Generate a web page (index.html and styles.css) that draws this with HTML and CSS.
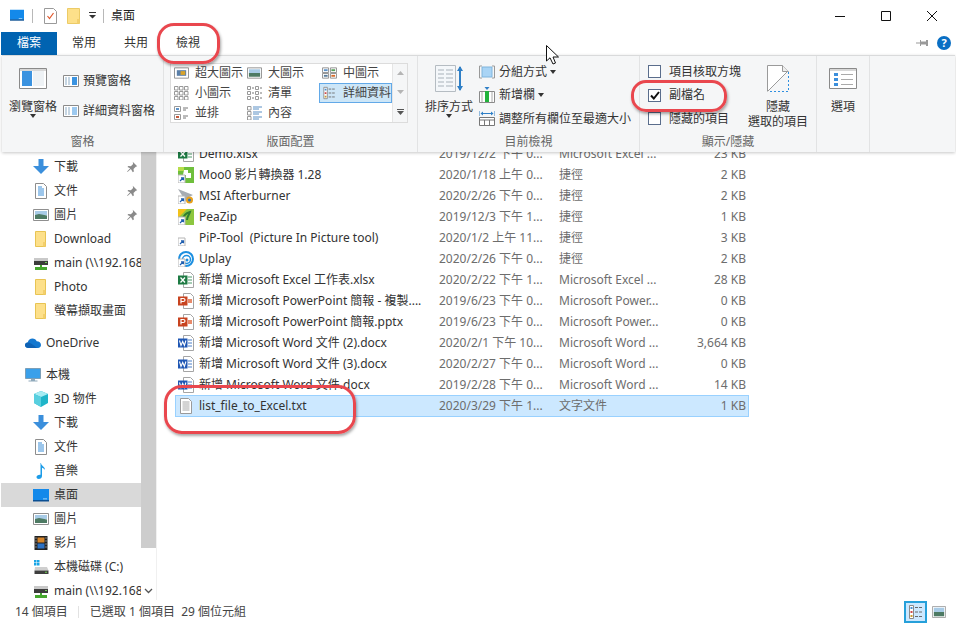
FILE: index.html
```html
<!DOCTYPE html>
<html lang="zh-Hant">
<head>
  <meta charset="UTF-8">
  <title>桌面</title>
  <link rel="stylesheet" href="styles.css">
</head>
<body>

<svg class="defs" width="0" height="0">
  <symbol id="i-folder" viewBox="0 0 16 16"><path d="M2.500 .5h10v15h-10z" fill="#fde08a" stroke="#e8c453"/><path d="M10 11h2.500v4.500H10z" fill="#f3cf6c"/></symbol>
  <symbol id="i-down" viewBox="0 0 16 16"><path d="M5.500 0h5v7H16l-8 8-8-8h5.500z" fill="#3b8fdc"/></symbol>
  <symbol id="i-doc" viewBox="0 0 16 16"><path d="M2.500 .5h8l3 3v12h-11z" fill="#fff" stroke="#8d8d8d"/><path d="M5 4h4M5 6h6M5 8h6M5 10h6M5 12h6" stroke="#3a8ed8"/></symbol>
  <symbol id="i-pic" viewBox="0 0 16 16"><path d="M.5 2.500h15v11H.5z" fill="#fff" stroke="#8f8f8f"/><path d="M2 4h12v4H2z" fill="#a8cbe6"/><path d="M2 8l4-1 8 1.500V12H2z" fill="#4d7a63"/></symbol>
  <symbol id="i-nas" viewBox="0 0 16 16"><path d="M1 3h14v3H1z" fill="#c9c9c9"/><path d="M1 6h14v4H1z" fill="#3c3c3c"/><path d="M12 7h2v1h-2z" fill="#6fd34f"/><path d="M7 10h2v2h5v3H2v-3h5z" fill="#46a72f"/></symbol>
  <symbol id="i-cloud" viewBox="0 0 16 16"><path d="M3.500 13C1.500 13 0 11.800 0 10.200 0 8.700 1.100 7.700 2.700 7.500 3.300 5 5.200 3.500 7.500 3.500c1.900 0 3.500 1 4.200 2.800C14.200 6.300 16 8 16 10.100 16 11.800 14.800 13 13 13z" fill="#1478d0"/><path d="M3.500 13C1.500 13 0 11.800 0 10.200 0 8.700 1.100 7.700 2.700 7.500c2 0 3.500 1 5.500 2.500l4 3z" fill="#0f62b4"/></symbol>
  <symbol id="i-pc" viewBox="0 0 16 16"><path d="M.5 1.500h15v10H.5z" fill="#3aa0ea" stroke="#7b9fb8"/><path d="M6 12h4v1.500h2.500v1h-9v-1H6z" fill="#8fa9bb"/></symbol>
  <symbol id="i-cube" viewBox="0 0 16 16"><path d="M8 0l7 3v9l-7 4-7-4V3z" fill="#1fb5c9"/><path d="M8 0l7 3-7 3-7-3z" fill="#a7ecf3"/><path d="M8 6v10l-7-4V3z" fill="#58cfdf"/></symbol>
  <symbol id="i-music" viewBox="0 0 16 16"><path d="M8 0c0 3 4 3.500 4 7-1-1.500-2-2-3-2.300V13c0 2-1.500 3-3.200 3C4.300 16 3.500 15 3.500 14c0-1.300 1.500-2.500 4-2.300V0z" fill="#1c9ce8"/></symbol>
  <symbol id="i-desk" viewBox="0 0 16 16"><path d="M0 2h16v11.500H0z" fill="#1389ea"/><path d="M0 13h16v1.500H0z" fill="#0b4f92"/><path d="M10 11.500h4v.8h-4z" fill="#bfe2fb"/></symbol>
  <symbol id="i-film" viewBox="0 0 16 16"><path d="M1.500 1h13v14h-13z" fill="#222"/><path d="M4.500 2.500h7v5h-7z" fill="#d6852a"/><path d="M4.500 8.500h7v5h-7z" fill="#2c71c4"/><path d="M2.500 2.500h1v1h-1zM2.500 5.500h1v1h-1zM2.500 8.500h1v1h-1zM2.500 11.500h1v1h-1zM12.500 2.500h1v1h-1zM12.500 5.500h1v1h-1zM12.500 8.500h1v1h-1zM12.500 11.500h1v1h-1z" fill="#ddd"/></symbol>
  <symbol id="i-drive" viewBox="0 0 16 16"><path d="M1 1h2.500v2.500H1zM4 1h2.500v2.500H4zM1 4h2.500v2.500H1zM4 4h2.500v2.500H4z" fill="#19a5e6"/><path d="M2 8h12l1.500 3.500h-14z" fill="#cfcfcf"/><path d="M1.500 11.500h14V15h-14z" fill="#3f3f3f"/><path d="M12 12.800h2v1h-2z" fill="#6fd34f"/></symbol>
  <symbol id="i-pin" viewBox="0 0 16 16"><path d="M9 1l6 6-2 .5-3 3 .5 3.500L9 15 6.500 10.500 2 14.500 1.500 14 5.500 9.500 2 8l1-1.500 3.500.5 3-3z" fill="#8a8a8a"/></symbol>
  <symbol id="i-xlsx" viewBox="0 0 16 16"><path d="M5.500 .5h7l3 3v12h-10z" fill="#fff" stroke="#a5a5a5"/><path d="M10 5h4M10 8h4M10 11h4" stroke="#4d9a6b"/><path d="M0 3.500h9.500v9H0z" fill="#1d7a43"/><path d="M2.500 5.500l4.500 5M7 5.500l-4.500 5" stroke="#fff" stroke-width="1.300"/></symbol>
  <symbol id="i-pptx" viewBox="0 0 16 16"><path d="M5.500 .5h7l3 3v12h-10z" fill="#fff" stroke="#a5a5a5"/><path d="M10 6h4v4h-4z" fill="#e88a6a"/><path d="M0 3.500h9.500v9H0z" fill="#c8431f"/><path d="M3 10.500v-5h2.200c1.200 0 1.800.6 1.800 1.500S6.400 8.500 5.200 8.500H3" fill="none" stroke="#fff" stroke-width="1.200"/></symbol>
  <symbol id="i-docx" viewBox="0 0 16 16"><path d="M5.500 .5h7l3 3v12h-10z" fill="#fff" stroke="#a5a5a5"/><path d="M10 5h4M10 8h4M10 11h4" stroke="#4a7fc8"/><path d="M0 3.500h9.500v9H0z" fill="#1f57b4"/><path d="M1.500 5.500l1.500 5 1.700-4 1.700 4 1.500-5" fill="none" stroke="#fff" stroke-width="1.100"/></symbol>
  <symbol id="i-txt" viewBox="0 0 16 16"><path d="M2.500 .5h8l3 3v12h-11z" fill="#fff" stroke="#9a9a9a"/><path d="M4.500 4h7M4.500 6h7M4.500 8h7M4.500 10h7M4.500 12h7" stroke="#a8a8a8"/></symbol>
  <symbol id="i-short" viewBox="0 0 16 16"><path d="M0 8h7v8H0z" fill="#fff" stroke="#b5b5b5"/><path d="M2 14l3-3M3 10.800h2.500v2.500" fill="none" stroke="#1f5fb0" stroke-width="1.200"/></symbol>
  <symbol id="i-moo" viewBox="0 0 16 16"><path d="M0 0h16v16H0z" fill="#6fbf3c"/><path d="M6 3h4v3h3v5H8V8H5z" fill="#fff"/><path d="M0 0h6v4H0z" fill="#b7dd4b"/></symbol>
  <symbol id="i-msi" viewBox="0 0 16 16"><path d="M0 1l15 6-6 3-2 4-2-5z" fill="#a6acb2"/><circle cx="11.500" cy="12" r="3.500" fill="#e8a019"/><circle cx="11.500" cy="12" r="1.500" fill="#2a6fc0"/></symbol>
  <symbol id="i-pea" viewBox="0 0 16 16"><path d="M0 0h16v16H0z" fill="#8cc63f"/><path d="M0 0h9L0 9z" fill="#f2c21a"/><path d="M4 12c1-5 4-8 8-9-1 3-3 5-3 8" fill="none" stroke="#2e7d32" stroke-width="2"/></symbol>
  <symbol id="i-uplay" viewBox="0 0 16 16"><circle cx="8" cy="8" r="7" fill="none" stroke="#1c8fe0" stroke-width="2"/><circle cx="8.500" cy="8.500" r="4" fill="none" stroke="#1c8fe0" stroke-width="1.500"/><circle cx="9" cy="9" r="1.500" fill="#1c8fe0"/></symbol>
  <symbol id="i-details" viewBox="0 0 16 16"><path d="M1.500 1.500h4v13h-4z" fill="#fff" stroke="#8a8a8a"/><path d="M2.500 3h2v2h-2z" fill="#4a90d0"/><path d="M2.500 7h2v2h-2z" fill="#d04a4a"/><path d="M2.500 11h2v2h-2z" fill="#c89a30"/><path d="M7 3.500h3M11 3.500h3M7 8h3M11 8h3M7 12.500h3M11 12.500h3" stroke="#6a6a6a"/></symbol>
</svg>

<div class="window">

  <header class="titlebar">
    <svg class="qa-pc" width="16" height="14" viewBox="0 1 16 14"><use href="#i-desk"/></svg>
    <span class="qa-sep"></span>
    <svg class="qa-doc" width="13" height="16" viewBox="0 0 13 16"><path d="M.5.5h9l3 3v12H.5z" fill="#fff" stroke="#9a9a9a"/><path d="M3.500 8l2 2.500L9.500 5" fill="none" stroke="#e0562a" stroke-width="1.200"/></svg>
    <svg class="qa-folder" width="13" height="16" viewBox="0 0 13 16"><path d="M.5.5h12v15H.5z" fill="#fde08a" stroke="#eccb66"/><path d="M10 11h2.500v4.500H10z" fill="#f3cf6c"/></svg>
    <svg class="qa-drop" width="7" height="7" viewBox="0 0 7 7"><path d="M0 0h7v1H0zM0 3h7L3.500 6.500z" fill="#333"/></svg>
    <span class="qa-sep qa-sep2"></span>
    <span class="title-text">桌面</span>
    <div class="win-btns">
      <svg width="10" height="10" viewBox="0 0 10 10"><path d="M0 5.500h10" stroke="#111"/></svg>
      <svg width="10" height="10" viewBox="0 0 10 10"><path d="M.5.5h9v9h-9z" fill="none" stroke="#111"/></svg>
      <svg width="10" height="10" viewBox="0 0 10 10"><path d="M0 0l10 10M10 0L0 10" stroke="#111"/></svg>
    </div>
  </header>

  <nav class="tabs">
    <span class="tab tab-file">檔案</span>
    <span class="tab">常用</span>
    <span class="tab">共用</span>
    <span class="tab">檢視</span>
    <svg class="tab-pin" width="12" height="8" viewBox="0 0 12 8"><path d="M0 3.500h4V1h1v1.500h5V1h2v6h-2V5.500H5V7H4V4.500H0z" fill="#9a9a9a"/></svg>
    <span class="tab-help">?</span>
  </nav>

  <section class="ribbon">

    <div class="group g-pane">
      <div class="group-body">
        <div class="big big-nav">
          <span class="big-icon">
            <svg width="28" height="21" viewBox="0 0 28 21"><path d="M.5.500h27v20H.5z" fill="#fff" stroke="#8a8a8a"/><path d="M1 1h26v2H1z" fill="#d8d8d8"/><path d="M3 3h10v15H3z" fill="#3b93e0"/><path d="M14 3h11v15H14z" fill="#eef2f5"/></svg>
          </span>
          <span>瀏覽窗格</span>
          <span class="caret"></span>
        </div>
        <div class="pane-list">
          <div class="pane-item">
            <svg width="16" height="12" viewBox="0 0 16 12"><path d="M.5.500h15v11H.5z" fill="#fff" stroke="#8a8a8a"/><path d="M2 2h2v8H2zM5 2h2v8H5z" fill="#c5d5e2"/><path d="M9 2h5v8H9z" fill="#3b93e0"/></svg>
            <span>預覽窗格</span>
          </div>
          <div class="pane-item">
            <svg width="16" height="12" viewBox="0 0 16 12"><path d="M.5.500h15v11H.5z" fill="#fff" stroke="#8a8a8a"/><path d="M2 2h2v8H2zM5 2h2v8H5z" fill="#c5d5e2"/><path d="M9 3h5M9 5h5M9 7h5M9 9h5" stroke="#3b93e0"/></svg>
            <span>詳細資料窗格</span>
          </div>
        </div>
      </div>
      <div class="group-label">窗格</div>
    </div>

    <div class="group g-layout">
      <div class="group-body">
        <div class="gallery">
          <div class="gallery-grid">
            <div class="g-item"><svg width="15" height="12" viewBox="0 0 16 12"><path d="M.5.500h15v11H.5z" fill="#fff" stroke="#8f8f8f"/><path d="M3 3h10v6H3z" fill="#5a7fa8"/><path d="M7 4h5v4H7z" fill="#d9a32a"/></svg><span>超大圖示</span></div>
            <div class="g-item"><svg width="15" height="12" viewBox="0 0 16 12"><path d="M.5.500h15v11H.5z" fill="#fff" stroke="#8f8f8f"/><path d="M2 2h12v4H2z" fill="#a8cbe6"/><path d="M2 6h12v4H2z" fill="#4d7a63"/></svg><span>大圖示</span></div>
            <div class="g-item"><svg width="15" height="12" viewBox="0 0 16 12"><path d="M.5.500h6.500v5H.5zM9 .5h6.500v5H9zM.5 6.500h6.500v5H.5zM9 6.500h6.500v5H9z" fill="#fff" stroke="#8f8f8f"/><path d="M2 2h4v2H2z" fill="#5d93c9"/><path d="M10 2h4v2h-4z" fill="#57a05a"/><path d="M2 8h4v2H2z" fill="#5a7d9a"/><path d="M10 8h4v2h-4z" fill="#d66b2a"/></svg><span>中圖示</span></div>

            <div class="g-item"><svg width="15" height="14" viewBox="0 0 15 14"><path d="M.5.500h3.500v3.500H.5zM5.500.500H9v3.500H5.500zM10.500.500H14v3.500h-3.500zM.5 5.500h3.500V9H.5zM5.500 5.500H9V9H5.500zM10.500 5.500H14V9h-3.500zM.5 10.500h3.500V14H.5zM5.500 10.500H9V14H5.500zM10.500 10.500H14V14h-3.500z" fill="#fff" stroke="#999"/></svg><span>小圖示</span></div>
            <div class="g-item"><svg width="15" height="14" viewBox="0 0 15 14"><path d="M.5.500h3v3h-3zM.5 5.500h3v3h-3zM.5 10.500h3v3h-3zM8.500.500h3v3h-3zM8.500 5.500h3v3h-3zM8.500 10.500h3v3h-3z" fill="#fff" stroke="#999"/><path d="M5 2h2M5 7h2M5 12h2M13 2h2M13 7h2M13 12h2" stroke="#777"/></svg><span>清單</span></div>
            <div class="g-item g-selected"><svg width="15" height="14" viewBox="0 0 16 16"><use href="#i-details"/></svg><span>詳細資料</span></div>

            <div class="g-item"><svg width="15" height="14" viewBox="0 0 15 14"><path d="M.5.500h6v5h-6zM.5 8.500h6v5h-6z" fill="#fff" stroke="#999"/><path d="M2 2h3v2H2z" fill="#5d93c9"/><path d="M2 10h3v2H2z" fill="#c65a3a"/><path d="M9 2h5M9 4h3M9 10h5M9 12h3" stroke="#777"/></svg><span>並排</span></div>
            <div class="g-item"><svg width="15" height="14" viewBox="0 0 15 14"><path d="M.5.500h3.500v3.500H.5zM.5 5.500h3.500V9H.5zM.5 10.500h3.500V14H.5z" fill="#fff" stroke="#999"/><path d="M6 1h9M6 3h6M6 6h9M6 8h6M6 11h9M6 13h6" stroke="#5b8fc4"/></svg><span>內容</span></div>
          </div>
          <div class="gallery-spin">
            <svg width="7" height="4" viewBox="0 0 7 4"><path d="M0 4l3.500-4L7 4z" fill="#b5b5b5"/></svg>
            <svg width="7" height="4" viewBox="0 0 7 4"><path d="M0 0l3.500 4L7 0z" fill="#b5b5b5"/></svg>
            <svg width="7" height="6" viewBox="0 0 7 6"><path d="M0 0h7v1H0zM0 2h7L3.500 6z" fill="#555"/></svg>
          </div>
        </div>
      </div>
      <div class="group-label">版面配置</div>
    </div>

    <div class="group g-view">
      <div class="group-body">
        <div class="big big-sort">
          <span class="big-icon">
            <svg width="28" height="27" viewBox="0 0 28 27"><path d="M.5.500h20v26H.5z" fill="#f4f7fa" stroke="#b5bcc2"/><path d="M3 5h6M11 5h7M3 9h6M11 9h7M3 13h6M11 13h7M3 17h6M11 17h7M3 21h6M11 21h7" stroke="#a9b2ba"/><path d="M25 2v23" stroke="#2f7fc6" stroke-width="2"/><path d="M22 6l3-5 3 5zM22 21l3 5 3-5z" fill="#2f7fc6"/></svg>
          </span>
          <span>排序方式</span>
          <span class="caret"></span>
        </div>
        <div class="view-list">
          <div class="view-item"><svg width="16" height="14" viewBox="0 0 16 14"><path d="M3 1H.5v12H3M13 1h2.500v12H13" fill="none" stroke="#999"/><path d="M3 2h10v10H3z" fill="#a9d4f5" stroke="#7fb4dc"/></svg><span>分組方式</span><span class="caret"></span></div>
          <div class="view-item"><svg width="16" height="16" viewBox="0 0 16 16"><path d="M.5 4.500h15v11H.5z" fill="#fff" stroke="#8a8a8a"/><path d="M6 4h4v11H6z" fill="#22b33c"/><path d="M5.500 0h5L8 3z" fill="#2f7fc6"/><path d="M3 5v10M13 5v10" stroke="#aaa"/></svg><span>新增欄</span><span class="caret"></span></div>
          <div class="view-item"><svg width="16" height="15" viewBox="0 0 16 15"><path d="M0 0v5M16 0v5M2 2.500h12" stroke="#2f7fc6"/><path d="M4 .5L1.500 2.500 4 4.500zM12 .5l2.500 2L12 4.500z" fill="#2f7fc6"/><path d="M.5 6.500h15v8H.5zM.5 9h15M5.500 9v5.500M10.500 9v5.500" fill="#fff" stroke="#777"/></svg><span>調整所有欄位至最適大小</span></div>
        </div>
      </div>
      <div class="group-label">目前檢視</div>
    </div>

    <div class="group g-show">
      <div class="group-body">
        <div class="check-list">
          <label class="check-item"><span class="box"></span><span>項目核取方塊</span></label>
          <label class="check-item"><span class="box"><svg width="10" height="9" viewBox="0 0 10 9"><path d="M1 4.500l2.800 3L9 1" fill="none" stroke="#111" stroke-width="2"/></svg></span><span>副檔名</span></label>
          <label class="check-item"><span class="box"></span><span>隱藏的項目</span></label>
        </div>
        <div class="big big-hide">
          <span class="big-icon">
            <svg width="22" height="27" viewBox="0 0 22 27"><path d="M.5 26.500V.5h15l6 6" fill="#fff" stroke="#9a9a9a"/><path d="M15.500.5v6h6" fill="#eee" stroke="#9a9a9a"/><path d="M21.500 7v19.500H1" fill="none" stroke="#2f8fe0" stroke-dasharray="2 2"/><path d="M1 26L21 6" stroke="#9a9a9a"/></svg>
          </span>
          <span>隱藏</span>
          <span>選取的項目</span>
        </div>
      </div>
      <div class="group-label">顯示/隱藏</div>
    </div>

    <div class="group g-opt">
      <div class="group-body">
        <div class="big big-opt">
          <span class="big-icon">
            <svg width="28" height="21" viewBox="0 0 28 21"><path d="M.5.500h27v20H.5z" fill="#fff" stroke="#8a8a8a"/><path d="M1 1h26v2H1z" fill="#d8d8d8"/><path d="M5 5h4v3H5zM5 10h4v3H5zM5 15h4v3H5z" fill="#3b8fdc"/><path d="M12 6.500h12M12 11.500h12M12 16.500h12" stroke="#aaa"/></svg>
          </span>
          <span>選項</span>
        </div>
      </div>
    </div>

  </section>

  <main class="content">

    <aside class="sidebar">
      <ul class="tree">
        <li class="node"><svg width="16" height="16"><use href="#i-down"/></svg><span>下載</span><svg class="pin" width="12" height="12" viewBox="0 0 16 16"><use href="#i-pin"/></svg></li>
        <li class="node"><svg width="16" height="16"><use href="#i-doc"/></svg><span>文件</span><svg class="pin" width="12" height="12" viewBox="0 0 16 16"><use href="#i-pin"/></svg></li>
        <li class="node"><svg width="16" height="16"><use href="#i-pic"/></svg><span>圖片</span><svg class="pin" width="12" height="12" viewBox="0 0 16 16"><use href="#i-pin"/></svg></li>
        <li class="node"><svg width="16" height="16"><use href="#i-folder"/></svg><span>Download</span></li>
        <li class="node"><svg width="16" height="16"><use href="#i-nas"/></svg><span>main (\\192.168.1.1)</span></li>
        <li class="node"><svg width="16" height="16"><use href="#i-folder"/></svg><span>Photo</span></li>
        <li class="node"><svg width="16" height="16"><use href="#i-folder"/></svg><span>螢幕擷取畫面</span></li>
        <li class="node root spaced"><svg width="16" height="16"><use href="#i-cloud"/></svg><span>OneDrive</span></li>
        <li class="node root spaced"><svg width="16" height="16"><use href="#i-pc"/></svg><span>本機</span></li>
        <li class="node"><svg width="16" height="16"><use href="#i-cube"/></svg><span>3D 物件</span></li>
        <li class="node"><svg width="16" height="16"><use href="#i-down"/></svg><span>下載</span></li>
        <li class="node"><svg width="16" height="16"><use href="#i-doc"/></svg><span>文件</span></li>
        <li class="node"><svg width="16" height="16"><use href="#i-music"/></svg><span>音樂</span></li>
        <li class="node current"><svg width="16" height="16"><use href="#i-desk"/></svg><span>桌面</span></li>
        <li class="node"><svg width="16" height="16"><use href="#i-pic"/></svg><span>圖片</span></li>
        <li class="node"><svg width="16" height="16"><use href="#i-film"/></svg><span>影片</span></li>
        <li class="node"><svg width="16" height="16"><use href="#i-drive"/></svg><span>本機磁碟 (C:)</span></li>
        <li class="node"><svg width="16" height="16"><use href="#i-nas"/></svg><span>main (\\192.168.1.1)</span></li>
      </ul>
      <div class="scrollbar">
        <div class="thumb"></div>
        <svg class="scroll-down" width="9" height="6" viewBox="0 0 9 6"><path d="M1 1l3.500 3.500L8 1" fill="none" stroke="#555" stroke-width="1.300"/></svg>
      </div>
    </aside>

    <div class="files">
      <div class="row"><svg width="16" height="16"><use href="#i-xlsx"/></svg><span class="c-name">Demo.xlsx</span><span class="c-date">2019/12/2 下午 0...</span><span class="c-type">Microsoft Excel ...</span><span class="c-size">23 KB</span></div>
      <div class="row"><svg width="16" height="16"><use href="#i-moo"/><use href="#i-short"/></svg><span class="c-name">Moo0 影片轉換器 1.28</span><span class="c-date">2020/1/18 上午 0...</span><span class="c-type">捷徑</span><span class="c-size">2 KB</span></div>
      <div class="row"><svg width="16" height="16"><use href="#i-msi"/><use href="#i-short"/></svg><span class="c-name">MSI Afterburner</span><span class="c-date">2020/2/26 下午 0...</span><span class="c-type">捷徑</span><span class="c-size">2 KB</span></div>
      <div class="row"><svg width="16" height="16"><use href="#i-pea"/><use href="#i-short"/></svg><span class="c-name">PeaZip</span><span class="c-date">2019/12/3 下午 1...</span><span class="c-type">捷徑</span><span class="c-size">1 KB</span></div>
      <div class="row"><svg width="16" height="16"><use href="#i-short"/></svg><span class="c-name">PiP-Tool&nbsp; (Picture In Picture tool)</span><span class="c-date">2020/1/2 上午 11...</span><span class="c-type">捷徑</span><span class="c-size">3 KB</span></div>
      <div class="row"><svg width="16" height="16"><use href="#i-uplay"/><use href="#i-short"/></svg><span class="c-name">Uplay</span><span class="c-date">2020/2/26 下午 0...</span><span class="c-type">捷徑</span><span class="c-size">2 KB</span></div>
      <div class="row"><svg width="16" height="16"><use href="#i-xlsx"/></svg><span class="c-name">新增 Microsoft Excel 工作表.xlsx</span><span class="c-date">2020/2/22 下午 1...</span><span class="c-type">Microsoft Excel ...</span><span class="c-size">28 KB</span></div>
      <div class="row"><svg width="16" height="16"><use href="#i-pptx"/></svg><span class="c-name">新增 Microsoft PowerPoint 簡報 - 複製....</span><span class="c-date">2019/6/23 下午 0...</span><span class="c-type">Microsoft Power...</span><span class="c-size">0 KB</span></div>
      <div class="row"><svg width="16" height="16"><use href="#i-pptx"/></svg><span class="c-name">新增 Microsoft PowerPoint 簡報.pptx</span><span class="c-date">2019/6/23 下午 0...</span><span class="c-type">Microsoft Power...</span><span class="c-size">0 KB</span></div>
      <div class="row"><svg width="16" height="16"><use href="#i-docx"/></svg><span class="c-name">新增 Microsoft Word 文件 (2).docx</span><span class="c-date">2020/2/1 下午 10...</span><span class="c-type">Microsoft Word ...</span><span class="c-size">3,664 KB</span></div>
      <div class="row"><svg width="16" height="16"><use href="#i-docx"/></svg><span class="c-name">新增 Microsoft Word 文件 (3).docx</span><span class="c-date">2020/2/27 下午 0...</span><span class="c-type">Microsoft Word ...</span><span class="c-size">0 KB</span></div>
      <div class="row"><svg width="16" height="16"><use href="#i-docx"/></svg><span class="c-name">新增 Microsoft Word 文件.docx</span><span class="c-date">2019/2/28 下午 0...</span><span class="c-type">Microsoft Word ...</span><span class="c-size">14 KB</span></div>
      <div class="row row-selected"><svg width="16" height="16"><use href="#i-txt"/></svg><span class="c-name">list_file_to_Excel.txt</span><span class="c-date">2020/3/29 下午 1...</span><span class="c-type">文字文件</span><span class="c-size">1 KB</span></div>
    </div>

  </main>

  <footer class="statusbar">
    <span class="st-count">14 個項目</span>
    <span class="st-sep"></span>
    <span>已選取 1 個項目&nbsp; 29 個位元組</span>
    <div class="st-views">
      <span class="st-view st-on"><svg width="16" height="16"><use href="#i-details"/></svg></span>
      <span class="st-view"><svg width="14" height="12" viewBox="0 0 16 14"><path d="M.5.500h15v13H.5z" fill="#fff" stroke="#999"/><path d="M2 2h12v5H2z" fill="#a8cbe6"/><path d="M2 7h12v5H2z" fill="#4d7a63"/></svg></span>
    </div>
  </footer>

  <!-- 빨간 표시 / 마우스 커서 -->
  <div class="mark mark-tab"></div>
  <div class="mark mark-ext"></div>
  <div class="mark mark-file"></div>
  <svg class="cursor" width="13" height="20" viewBox="0 0 13 20"><path d="M.5.500V16L4 12.800 7 19l2.500-1L7 12h5.500z" fill="#fff" stroke="#111"/></svg>

</div>

</body>
</html>
```

FILE: styles.css
```css
*{
  box-sizing:border-box;
}

body,ul,li{
  margin:0px; padding:0px; list-style:none;
}

body{
  background:#fff;
  font-family:"Noto Sans","Noto Sans CJK TC",sans-serif;
  font-size:12px;
  line-height:16px;
  color:#2b2b2b;
}

svg{
  display:block; flex:none;
}

.defs{
  position:absolute;
}

.window{
  width:956px; height:624px; position:relative; overflow:hidden;
  display:flex; flex-direction:column; background:#fff;
}

/* title bar */
.titlebar{
  height:31px; flex:none; display:flex; align-items:center; padding-left:9px;
}

.qa-sep{
  width:1px; height:14px; background:#b8b8b8; margin:0px 11px 0px 7px;
}

.qa-folder{
  margin-left:10px;
}

.qa-drop{
  margin-left:9px;
}

.qa-sep2{
  margin:0px 7px 0px 7px;
}

.title-text{
  color:#222;
}

.win-btns{
  margin-left:auto; margin-right:19px; display:flex; gap:36px;
}

/* tabs */
.tabs{
  height:24px; flex:none; display:flex; align-items:center; padding-left:1px;
}

.tab{
  width:52px; height:23px; line-height:21px; text-align:center; color:#333;
}

.tab-file{
  width:56px; background:#0063b1; color:#fff; margin-right:1px;
}

.tab-pin{
  margin-left:auto;
}

.tab-help{
  width:14px; height:14px; border-radius:50%; background:#0a6fc4; color:#fff;
  font-size:11px; font-weight:700; line-height:14px; text-align:center;
  margin:0px 5px 0px 9px;
}

/* ribbon */
.ribbon{
  height:97px; flex:none; display:flex; margin-left:2px; margin-right:1px;
  background:#f5f6f7; border-top:1px solid #d9dadb;
  position:relative; z-index:2; box-shadow:0px 1px 3px rgba(0,0,0,.22);
}

.group{
  display:flex; flex-direction:column; border-right:1px solid #e2e3e4;
  color:#333;
}

.group-body{
  height:74px; display:flex;
}

.group-label{
  flex:1; text-align:center; color:#666; padding-top:4px;
}

.g-pane{ width:162px; }
.g-layout{ width:254px; }
.g-view{ width:222px; }
.g-show{ width:177px; }
.g-opt{ width:53px; }

.big{
  display:flex; flex-direction:column; align-items:center; padding-top:4px;
  white-space:nowrap; line-height:15px;
}

.big-icon{
  height:36px; margin-bottom:3px; display:flex; align-items:center;
}

.caret{
  width:0px; height:0px; border:3.5px solid transparent; border-top:4px solid #333; border-bottom:0px;
}

.big .caret{
  margin-top:0px;
}

.big-nav{
  width:52px; margin-left:5px;
}

.pane-list{
  margin-left:4px; padding-top:17px; display:flex; flex-direction:column; gap:14px;
}

.pane-item{
  display:flex; align-items:center; gap:4px; white-space:nowrap;
}

/* gallery */
.g-layout .group-body{
  padding:7px 0px 0px 6px;
}

.gallery{
  width:238px; height:60px; display:flex; background:#fff; border:1px solid #dcdcdc;
}

.gallery-grid{
  width:221px; display:grid; grid-template-columns:73px 75px 73px; grid-auto-rows:20px; margin-top:-1px;
}

.g-item{
  display:flex; align-items:center; gap:6px; padding-left:3px; white-space:nowrap; color:#444;
}

.g-selected{
  background:#cde6f7; border:1px solid #62a9e8; padding-left:2px;
}

.gallery-spin{
  flex:1; border-left:1px solid #e5e5e5; background:#f5f6f7;
  display:flex; flex-direction:column; align-items:center; justify-content:space-between;
  padding:7px 0px 7px;
}

/* current view */
.big-sort{
  width:52px; margin-left:5px;
}

.view-list{
  margin-left:4px; padding-top:4px;
}

.view-item{
  height:23.5px; display:flex; align-items:center; gap:4px; white-space:nowrap;
}

.view-item .caret{
  margin-left:-1px;
}

/* show / hide */
.check-list{
  margin-left:8px; padding-top:4px;
}

.check-item{
  height:23.5px; display:flex; align-items:center; gap:8px; white-space:nowrap;
}

.box{
  width:13px; height:13px; border:1px solid #5a6d8c; background:#fff;
  display:flex; align-items:center; justify-content:center;
}

.big-hide{
  width:76px; margin-left:auto; margin-right:1px;
}

.big-opt{
  width:52px;
}

/* content */
.content{
  flex:1; min-height:0; display:flex; overflow:hidden;
}

.sidebar{
  width:157px; flex:none; display:flex; border-right:1px solid #f0f0f0;
}

.tree{
  width:141px; flex:none; padding-top:3px; overflow:hidden;
}

.node{
  height:24px; display:flex; align-items:center; gap:5px; padding-left:32px; margin-left:1px;
  white-space:nowrap; overflow:hidden; color:#333;
}

.node span{
  overflow:hidden; flex:1;
}

.root{
  padding-left:24px;
}

.spaced{
  margin-top:8px;
}

.current{
  background:#d9d9d9;
}

.pin{
  margin-right:3px;
}

.scrollbar{
  width:15px; flex:none; display:flex; flex-direction:column;
}

.thumb{
  height:396px; background:#cdcdcd;
}

.scroll-down{
  margin:40px 0px 0px 3px;
}

/* file list */
.files{
  flex:1; padding-left:18px; overflow:hidden;
}

.row{
  width:574px; height:21px; display:flex; align-items:center; padding:0px 3px; white-space:nowrap;
}

.row:first-child{
  margin-top:-9px;
}

.row svg{
  margin-right:5px;
}

.c-name{
  width:240px; color:#333; overflow:hidden;
}

.c-date{
  width:120px; color:#6d6d6d;
}

.c-type{
  width:110px; color:#6d6d6d;
}

.c-size{
  flex:1; text-align:right; color:#6d6d6d;
}

.row-selected{
  height:22px; background:#cce8ff; box-shadow:inset 0px 0px 0px 1px #99d1ff;
}

/* status bar */
.statusbar{
  height:24px; flex:none; display:flex; align-items:center; padding-left:15px; color:#444;
}

.st-sep{
  width:1px; height:12px; background:#e2e2e2; margin:0px 11px 0px 10px;
}

.st-views{
  margin-left:auto; margin-right:8px; display:flex; align-items:center; gap:3px;
}

.st-view{
  width:18px; height:22px; display:flex; align-items:center; justify-content:center;
}

.st-on{
  width:23px; background:#cce8ff; border:2px solid #26a0da;
}

/* 빨간 표시 */
.mark{
  position:absolute; z-index:5; border:3px solid #e9474e; border-radius:17px;
  box-shadow:1px 2px 3px rgba(0,0,0,.35);
}

.mark-tab{
  left:157px; top:23px; width:63px; height:41px;
}

.mark-ext{
  left:631px; top:80px; width:96px; height:32px; border-radius:15px;
}

.mark-file{
  left:164px; top:385px; width:192px; height:49px; border-radius:18px;
}

.cursor{
  position:absolute; z-index:6; left:546px; top:45px;
}
```
